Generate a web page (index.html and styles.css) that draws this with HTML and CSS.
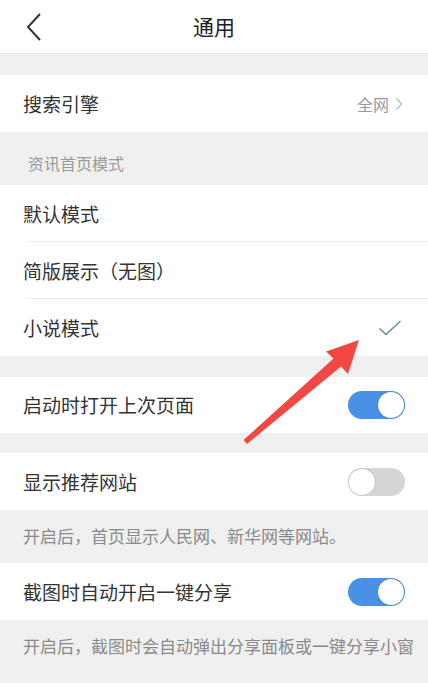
FILE: index.html
```html
<!DOCTYPE html>
<html lang="zh">
<head>
<meta charset="utf-8">
<link rel="stylesheet" href="styles.css">
</head>
<body>
<div class="page">
  <header class="header">
    <svg class="back" width="18" height="30" viewBox="0 0 18 30"><path d="M15 2 L3 15 L15 28" fill="none" stroke="#333" stroke-width="2"/></svg>
    <div class="title">通用</div>
  </header>

  <div class="gap g21"></div>
  <div class="row">
    <span class="label">搜索引擎</span>
    <span class="value">全网<svg class="chev" width="8" height="14" viewBox="0 0 8 14"><path d="M1.5 1.5 L6.5 7 L1.5 12.5" fill="none" stroke="#bbb" stroke-width="1.4"/></svg></span>
  </div>

  <div class="section-title">资讯首页模式</div>
  <div class="group">
    <div class="row sep"><span class="label">默认模式</span></div>
    <div class="row sep"><span class="label">简版展示（无图）</span></div>
    <div class="row"><span class="label">小说模式</span>
      <svg class="check" width="24" height="18" viewBox="0 0 24 18"><path d="M1.5 9.5 L8 15.5 L22.5 2" fill="none" stroke="#6e8c9c" stroke-width="1.6"/></svg>
    </div>
  </div>

  <div class="gap g21"></div>
  <div class="row h56"><span class="label">启动时打开上次页面</span><span class="toggle on"><span class="knob"></span></span></div>
  <div class="gap g20"></div>
  <div class="row"><span class="label">显示推荐网站</span><span class="toggle off"><span class="knob"></span></span></div>
  <div class="desc">开启后，首页显示人民网、新华网等网站。</div>
  <div class="row"><span class="label">截图时自动开启一键分享</span><span class="toggle on"><span class="knob"></span></span></div>
  <div class="desc last">开启后，截图时会自动弹出分享面板或一键分享小窗</div>

  <svg class="arrow" width="428" height="683" viewBox="0 0 428 683"><polygon points="243.5,440 333.5,358.5 326,351.5 359,340 348,374 341,366.5 247,444" fill="#f24843"/></svg>
</div>
</body>
</html>
```

FILE: styles.css
```css
* { box-sizing: border-box; }
html, body { margin: 0; padding: 0; }
body {
  background: #f0f0f0;
  font-family: "Noto Sans CJK SC", "Noto Sans", sans-serif;
  color: #333;
}
.page {
  position: relative;
  width: 428px;
  height: 683px;
  overflow: hidden;
}
.header {
  height: 54px;
  background: #fff;
  border-bottom: 1px solid #e6e6e6;
  display: flex;
  align-items: center;
  justify-content: center;
  position: relative;
}
.back {
  position: absolute;
  left: 25px;
  top: 12px;
}
.title {
  font-size: 21px;
  color: #222;
  line-height: 1;
}
.gap { background: #f0f0f0; }
.g21 { height: 21px; }
.g20 { height: 20px; }
.row {
  height: 57px;
  background: #fff;
  display: flex;
  align-items: center;
  justify-content: space-between;
  padding: 0 23px;
  position: relative;
}
.row.h56 { height: 56px; }
.row.sep::after {
  content: "";
  position: absolute;
  left: 27px;
  right: 0;
  bottom: 0;
  height: 1px;
  background: #ececec;
}
.label {
  font-size: 19px;
  line-height: 24px;
  color: #333;
}
.value {
  display: flex;
  align-items: center;
  gap: 6px;
  font-size: 16px;
  color: #999;
  margin-right: 2px;
}
.section-title {
  height: 53px;
  padding: 19px 0 0 28px;
  font-size: 16px;
  line-height: 24px;
  color: #9a9a9a;
}
.check { margin-right: 3px; }
.toggle {
  width: 57px;
  height: 28px;
  border-radius: 14px;
  position: relative;
  display: block;
  margin-right: 0;
}
.toggle.on { background: #4a90e6; }
.toggle.off { background: #d6d6d6; }
.knob {
  position: absolute;
  top: 1px;
  width: 26px;
  height: 26px;
  border-radius: 50%;
  background: #fff;
  box-shadow: 0 0 0 1px rgba(0,0,0,0.08);
}
.toggle.on .knob { right: 1px; }
.toggle.off .knob { left: 1px; }
.desc {
  height: 53px;
  padding: 14px 23px 0;
  font-size: 17px;
  line-height: 24px;
  color: #8a8a8a;
  white-space: nowrap;
}
.desc.last { height: 63px; }
.arrow {
  position: absolute;
  left: 0;
  top: 0;
  pointer-events: none;
}
```
